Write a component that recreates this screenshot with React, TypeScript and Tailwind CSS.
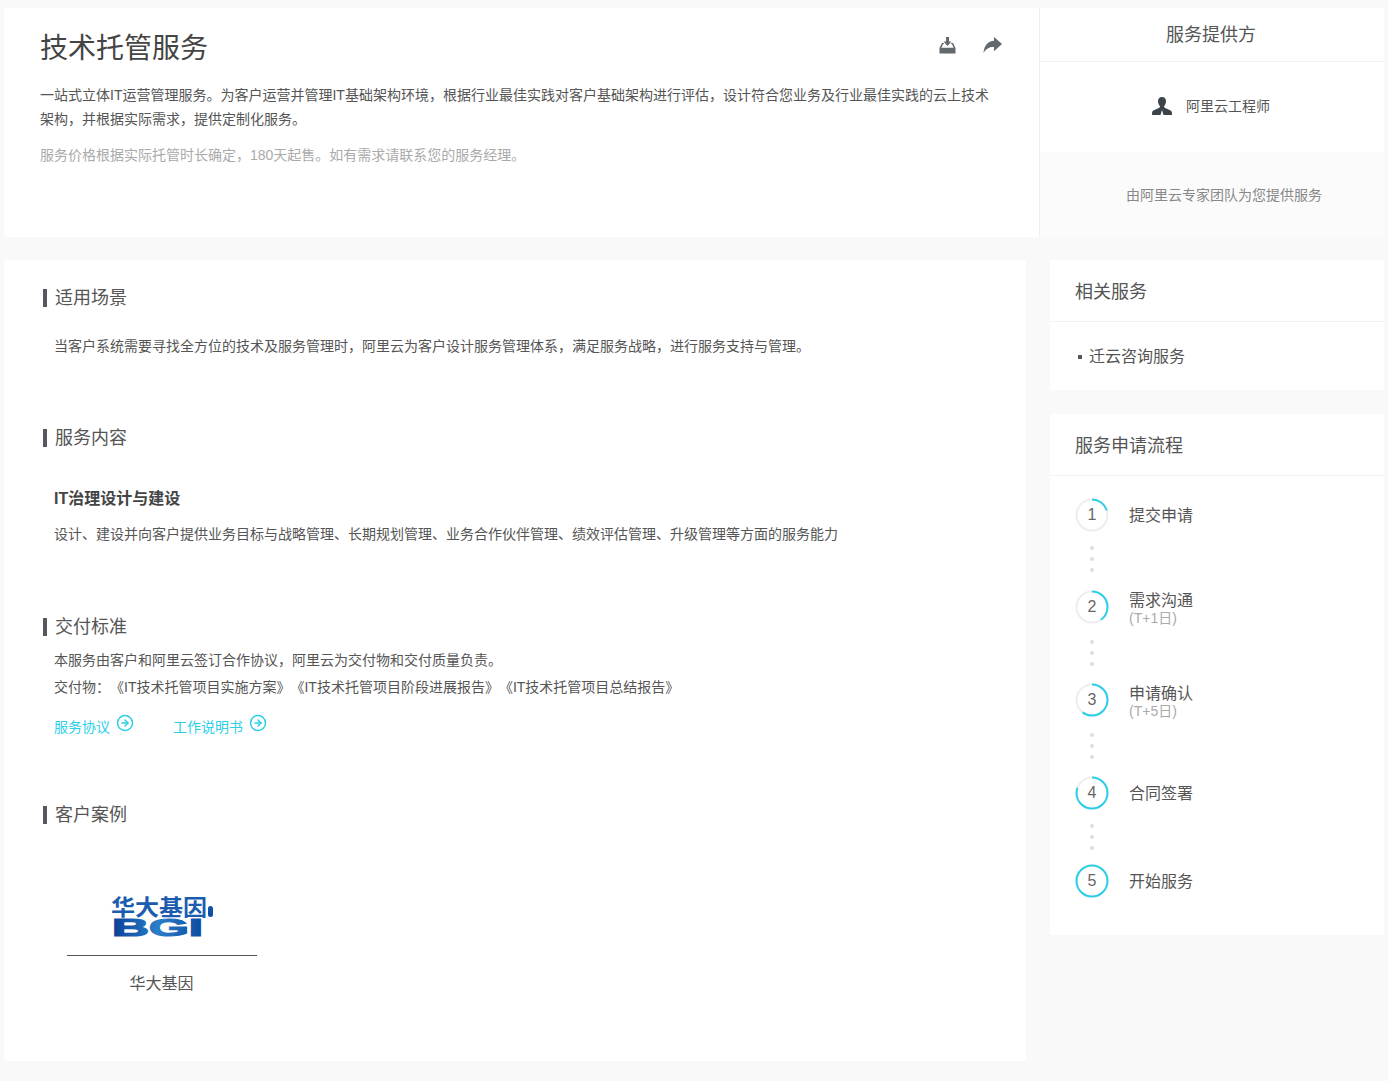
import { CircleArrowRight } from "lucide-react";

const FONT = "font-['Liberation_Sans','Noto_Sans_CJK_SC',sans-serif]";

const steps = [
  { n: 1, title: "提交申请", sub: "", pct: 0.2, dots: "mt-[14px] mb-[18px]" },
  { n: 2, title: "需求沟通", sub: "(T+1日)", pct: 0.4, dots: "mt-[16px] mb-[17px]" },
  { n: 3, title: "申请确认", sub: "(T+5日)", pct: 0.6, dots: "mt-[16px] mb-[17px]" },
  { n: 4, title: "合同签署", sub: "", pct: 0.8, dots: "mt-[14px] mb-[14px]" },
  { n: 5, title: "开始服务", sub: "", pct: 1, dots: "" },
];

function Ring({ n, pct }: { n: number; pct: number }) {
  const r = 15.5;
  const c = 2 * Math.PI * r;
  return (
    <div className="relative w-[34px] h-[34px] shrink-0">
      <svg width="34" height="34" viewBox="0 0 34 34" className="-rotate-90">
        <circle cx="17" cy="17" r={r} fill="none" stroke="#eeeeee" strokeWidth="2" />
        <circle
          cx="17"
          cy="17"
          r={r}
          fill="none"
          stroke="#2ccfe8"
          strokeWidth="2"
          strokeDasharray={`${c * pct} ${c}`}
        />
      </svg>
      <span className="absolute inset-0 flex items-center justify-center text-[16px] text-[#666666]">{n}</span>
    </div>
  );
}

function Heading({ children }: { children: string }) {
  return (
    <div className="flex items-center h-[26px] ml-[39px]">
      <span className="w-[4px] h-[18px] bg-[#55585c] mr-[8px]" />
      <h2 className="text-[18px] leading-[26px] text-[#555555] font-normal">{children}</h2>
    </div>
  );
}

function TrayIcon() {
  return (
    <svg width="17" height="17" viewBox="0 0 17 17" fill="#62686c">
      <path d="M7 0h3v4.500h2.400L8.500 9 4.600 4.500H7z" />
      <path d="M3 6h2.200l-.8 1.200H4L2.400 10.800h12.200L13 7.200h-.4L11.800 6H14l2.500 5v5.500H.5V11z" />
    </svg>
  );
}

function ShareIcon() {
  return (
    <svg width="19" height="17" viewBox="0 0 19 17" fill="#62686c">
      <path d="M11 0l8 7-8 7.200V10C6.500 9.800 3.200 11.500.5 16 1 9 5 3.800 11 3.800z" />
    </svg>
  );
}

function PersonIcon() {
  return (
    <svg width="20" height="18" viewBox="0 0 20 18" fill="#3d4449">
      <path d="M10 0c2.600 0 4 1.800 4 4.300 0 2.200-1 3.900-2 5 .1.800.4 1.300 1.200 1.700l5 2.300c1 .5 1.600 1.200 1.700 2.200l.1 2.500H0l.1-2.500c.1-1 .7-1.700 1.700-2.200l5-2.300c.8-.4 1.100-.9 1.200-1.700-1-1.100-2-2.800-2-5C6 1.800 7.400 0 10 0z" />
      <path d="M10 13l-1.500 5h3z" fill="#ffffff" />
    </svg>
  );
}

function BgiLogo() {
  return (
    <svg width="104" height="44" viewBox="0 0 104 44" className="overflow-visible">
      <defs>
        <linearGradient id="bgiBlue" x1="0" y1="0" x2="1" y2="0">
          <stop offset="0" stopColor="#0b3f97" />
          <stop offset="0.5" stopColor="#2a7fc8" />
          <stop offset="1" stopColor="#0b4aa2" />
        </linearGradient>
      </defs>
      <text
        x="1"
        y="20"
        fontSize="22"
        fontWeight="700"
        fill="#1b5cb0"
        fontFamily="'Noto Sans CJK SC', sans-serif"
        textLength="96"
        lengthAdjust="spacingAndGlyphs"
      >
        华大基因
      </text>
      <rect x="98" y="11" width="5" height="11" rx="2.500" fill="#0f4fa6" />
      <text
        x="2"
        y="41"
        fontSize="23"
        fontWeight="700"
        fill="url(#bgiBlue)"
        stroke="url(#bgiBlue)"
        strokeWidth="1.200"
        fontFamily="'Liberation Sans', sans-serif"
        textLength="91"
        lengthAdjust="spacingAndGlyphs"
      >
        BGI
      </text>
    </svg>
  );
}

export default function App() {
  return (
    <div className={`${FONT} [text-spacing-trim:space-all] min-h-[1081px] bg-[#f9f9f9] pt-[8px] pl-[4px] text-[14px] text-[#555555]`}>
      {/* top card */}
      <div className="flex w-[1380px] h-[229px] bg-white">
        <div className="relative w-[1036px] border-r border-[#eeeeee] pl-[36px] pt-[21px]">
          <h1 className="text-[28px] leading-[40px] font-normal text-[#444444]">技术托管服务</h1>
          <div className="absolute top-[29px] right-[37px] flex items-center gap-[27px]">
            <TrayIcon />
            <ShareIcon />
          </div>
          <p className="w-[952px] mt-[14px] leading-[24px] text-[#555555]">
            一站式立体IT运营管理服务。为客户运营并管理IT基础架构环境，根据行业最佳实践对客户基础架构进行评估，设计符合您业务及行业最佳实践的云上技术架构，并根据实际需求，提供定制化服务。
          </p>
          <p className="mt-[12px] leading-[24px] text-[#aaaaaa]">
            服务价格根据实际托管时长确定，180天起售。如有需求请联系您的服务经理。
          </p>
        </div>
        <div className="flex-1 flex flex-col">
          <div className="h-[54px] border-b border-[#f3f3f3] flex items-center justify-center text-[18px] text-[#555555] pr-[2px] pt-[2px]">
            服务提供方
          </div>
          <div className="h-[90px] flex items-center justify-center pr-[2px] pb-[2px]">
            <PersonIcon />
            <span className="ml-[14px] text-[#555555]">阿里云工程师</span>
          </div>
          <div className="flex-1 bg-[#fbfbfb] pl-[86px] pt-[31px] leading-[24px] text-[#888888]">
            由阿里云专家团队为您提供服务
          </div>
        </div>
      </div>

      {/* bottom row */}
      <div className="flex mt-[23px] items-start">
        <div className="w-[1022px] h-[801px] bg-white pt-[25px]">
          <Heading>适用场景</Heading>
          <p className="ml-[50px] mt-[23px] leading-[24px]">
            当客户系统需要寻找全方位的技术及服务管理时，阿里云为客户设计服务管理体系，满足服务战略，进行服务支持与管理。
          </p>

          <div className="mt-[67px]">
            <Heading>服务内容</Heading>
          </div>
          <h3 className="ml-[50px] mt-[36px] text-[16px] leading-[24px] font-bold text-[#444444]">IT治理设计与建设</h3>
          <p className="ml-[50px] mt-[11px] leading-[24px]">
            设计、建设并向客户提供业务目标与战略管理、长期规划管理、业务合作伙伴管理、绩效评估管理、升级管理等方面的服务能力
          </p>

          <div className="mt-[68px]">
            <Heading>交付标准</Heading>
          </div>
          <p className="ml-[50px] mt-[7px] leading-[27px]">本服务由客户和阿里云签订合作协议，阿里云为交付物和交付质量负责。</p>
          <p className="ml-[50px] leading-[27px]">
            交付物：《IT技术托管项目实施方案》《IT技术托管项目阶段进展报告》《IT技术托管项目总结报告》
          </p>
          <div className="ml-[50px] mt-[13px] flex items-center h-[24px] text-[#2ccfe8]">
            <span className="mt-[3px]">服务协议</span>
            <CircleArrowRight className="ml-[6px] -mt-[6px] w-[18px] h-[18px]" strokeWidth={2} />
            <span className="ml-[39px] mt-[3px]">工作说明书</span>
            <CircleArrowRight className="ml-[6px] -mt-[6px] w-[18px] h-[18px]" strokeWidth={2} />
          </div>

          <div className="mt-[64px]">
            <Heading>客户案例</Heading>
          </div>
          <div className="ml-[63px] mt-[67px] w-[190px] flex flex-col items-center">
            <BgiLogo />
            <div className="w-full mt-[16px] border-t border-[#555555]" />
            <span className="mt-[16px] text-[16px] leading-[24px] text-[#555555] -ml-[1px]">华大基因</span>
          </div>
        </div>

        <div className="ml-[24px] w-[334px]">
          <div className="h-[130px] bg-white">
            <div className="h-[62px] border-b border-[#f3f3f3] pl-[25px] pt-[4px] flex items-center text-[18px] text-[#555555]">
              相关服务
            </div>
            <div className="flex items-center pl-[28px] mt-[23px] text-[16px] leading-[24px]">
              <span className="w-[4px] h-[4px] bg-[#555555] mr-[7px]" />
              迁云咨询服务
            </div>
          </div>

          <div className="h-[521px] mt-[24px] bg-white">
            <div className="h-[62px] border-b border-[#f3f3f3] pl-[25px] pt-[4px] flex items-center text-[18px] text-[#555555]">
              服务申请流程
            </div>
            <div className="pl-[25px] pt-[22px]">
              {steps.map((s) => (
                <div key={s.n}>
                  <div className="flex items-center h-[34px]">
                    <Ring n={s.n} pct={s.pct} />
                    <div className={s.sub ? "ml-[20px] pt-[4px]" : "ml-[20px] pt-[2px]"}>
                      <div className="text-[16px] leading-[18px] text-[#555555]">{s.title}</div>
                      {s.sub && <div className="text-[14px] leading-[16px] text-[#aaaaaa]">{s.sub}</div>}
                    </div>
                  </div>
                  {s.dots && (
                    <div className={`${s.dots} ml-[15px] flex flex-col gap-[7px]`}>
                      <span className="w-[4px] h-[4px] bg-[#dddddd] rounded-full" />
                      <span className="w-[4px] h-[4px] bg-[#dddddd] rounded-full" />
                      <span className="w-[4px] h-[4px] bg-[#dddddd] rounded-full" />
                    </div>
                  )}
                </div>
              ))}
            </div>
          </div>
        </div>
      </div>
    </div>
  );
}
